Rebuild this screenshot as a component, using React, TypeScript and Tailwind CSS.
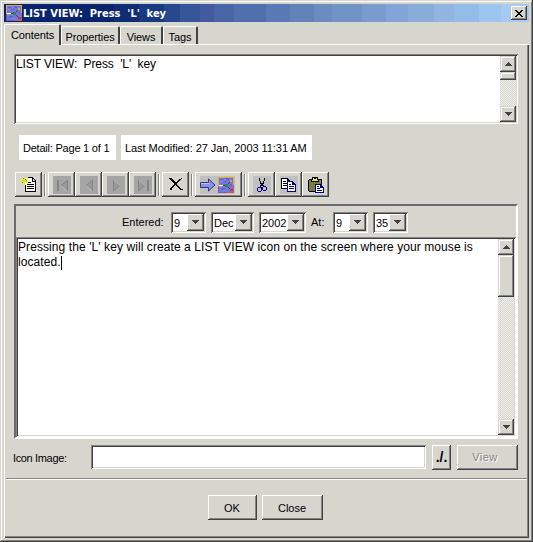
import type { ReactNode } from "react";

const RAISED =
  "bg-[#d6d6ce] shadow-[inset_-1px_-1px_#424242,inset_1px_1px_#ffffff,inset_-2px_-2px_#848484]";
const SUNKEN =
  "shadow-[inset_1px_1px_#848484,inset_-1px_-1px_#ffffff,inset_2px_2px_#424242,inset_-2px_-2px_#d6d6ce]";
const SCROLL_BTN =
  "bg-[#d6d6ce] shadow-[inset_-1px_-1px_#424242,inset_1px_1px_#d6d6ce,inset_-2px_-2px_#848484,inset_2px_2px_#ffffff]";

function Arrow({ up = false }: { up?: boolean }) {
  return (
    <svg width="7" height="4" viewBox="0 0 7 4" shapeRendering="crispEdges" className="block">
      <path fill="#424242" d={up ? "M3 0h1v1h1v1h1v1h1v1H0V3h1V2h1V1h1z" : "M0 0h7v1H6v1H5v1H4v1H3V3H2V2H1V1H0z"} />
    </svg>
  );
}

function ScrollBar({ thumb }: { thumb: string }) {
  return (
    <div className="flex h-full w-4 shrink-0 flex-col bg-[repeating-conic-gradient(#eeeeea_0_25%,#d6d6ce_0_50%)] bg-[length:2px_2px]">
      <div className={`flex h-4 items-center justify-center ${SCROLL_BTN}`}>
        <Arrow up />
      </div>
      <div className={`${thumb} ${SCROLL_BTN}`} />
      <div className="grow" />
      <div className={`flex h-4 items-center justify-center ${SCROLL_BTN}`}>
        <Arrow />
      </div>
    </div>
  );
}

function MapIcon() {
  return (
    <svg width="16" height="16" viewBox="0 0 16 16" shapeRendering="crispEdges" className="block">
      <path fill="#e8a830" d="M0 0h16v16H0z" />
      <path fill="#c85858" d="M15 8h1v8H6v-1h9z" />
      <path fill="#7858b8" d="M0 9h1v6h7v1H0z" />
      <path fill="#7078dc" d="M1 1h14v14H1z" />
      <path fill="#6064c4" d="M2 2h3v1H2zM8 1h3v2H8zM3 11h4v2H3zM12 7h2v2h-2zM5 4h3v1H5z" />
      <path fill="#8888e8" d="M2 4h3v1H2zM5 13h4v1H5zM6 2h2v1H6z" />
      <path stroke="#383878" d="M5 8.500h3M9 8l4-4M9 9l4 4" fill="none" />
      <path fill="#f4f0d8" d="M1 8h4v1H1z" />
      <path fill="#c0a868" d="M1 9h3v1H1z" />
      <path fill="#308838" d="M7 7h3v3H7z" />
      <path fill="#d8a848" d="M12 3h2v2h-2z" />
      <path fill="#c03838" d="M12 12h3v2h-3z" />
    </svg>
  );
}

function NewIcon() {
  return (
    <svg width="16" height="16" viewBox="0 0 16 16" shapeRendering="crispEdges" className="block">
      <path fill="#fff" d="M5 1h7v3h3v11H4V5h1z" />
      <path
        fill="#000"
        d="M7 0h5v1H7zM12 1h1v1h-1zM13 2h1v1h-1zM14 3h1v1h-1zM11 1h1v4h-1zM12 4h3v1h-3zM14 4h1v11h-1zM4 14h11v1H4zM4 8h1v7H4zM7 5h3v1H7zM6 7h7v1H6zM6 9h7v1H6zM6 11h7v1H6z"
      />
      <path fill="#e8e800" d="M3 0h1v2H3zM0 1h1v1H0zM1 2h1v1H1zM6 1h1v1H6zM5 2h1v1H5zM2 3h3v2H2zM0 4h2v1H0zM5 4h2v1H5zM1 6h1v1H1zM0 7h1v1H0zM3 6h1v2H3zM5 5h1v1H5zM6 6h1v1H6z" />
      <path fill="#848400" d="M2 1h1v1H2zM4 2h1v1H4zM1 5h1v1H1zM5 3h1v1H5z" />
    </svg>
  );
}

function NavIcon({ kind }: { kind: "first" | "prev" | "next" | "last" }) {
  const left = kind === "first" || kind === "prev";
  return (
    <svg width="18" height="18" viewBox="0 0 18 18" className="block bg-[#a5a5a5]">
      {kind === "first" && <path shapeRendering="crispEdges" fill="#848484" d="M4 4h2v11H4z" />}
      {kind === "last" && <path shapeRendering="crispEdges" fill="#848484" d="M13 4h2v11h-2z" />}
      {left ? (
        <g transform={kind === "first" ? "translate(2 0)" : undefined}>
          <path fill="#989898" d="M12 4.500v10L6 9.500z" />
          <path fill="none" stroke="#848484" d="M12.500 4v11M12 4.500L6 9.500" />
          <path fill="none" stroke="#bcbcbc" d="M6 10l6 5" />
        </g>
      ) : (
        <g transform={kind === "last" ? "translate(-2 0)" : undefined}>
          <path fill="#989898" d="M7 4.500v10l6-5z" />
          <path fill="none" stroke="#848484" d="M6.500 4v11M7 14.500l6-5" />
          <path fill="none" stroke="#b4b4b4" d="M7 4.500l6 5" />
        </g>
      )}
    </svg>
  );
}

function DeleteIcon() {
  return (
    <svg width="14" height="13" viewBox="0 0 14 13" shapeRendering="crispEdges" className="block">
      <path
        fill="#000"
        d="M0 0h3v1h1v1h1v1h1v1h2V3h1V2h1V1h2V0h1v1h-1v1h-1v1h-1v1H9v1H8v2h1v1h1v1h1v1h1v1h2v1h-3v-1h-1v-1H9v-1H8V8H7V7H6v1H5v1H4v1H3v2H1v-2h1V9h1V8h1V7h1V5H4V4H3V3H2V2H1V1H0z"
      />
    </svg>
  );
}

function GoIcon() {
  return (
    <svg width="16" height="14" viewBox="0 0 16 14" className="block">
      <path fill="#8890e8" stroke="#303878" d="M.5 4.500h8v-3.500l6.500 6-6.500 6v-3.500h-8z" />
      <path stroke="#b8c0ff" d="M1 5.500h8.500" />
    </svg>
  );
}

function CutIcon() {
  return (
    <svg width="18" height="18" viewBox="0 0 18 18" shapeRendering="crispEdges" className="block bg-[#c0c0c0]">
      <path fill="#000" d="M6 2h1v3H6zM7 5h1v3H7zM8 7h2v3H8zM10 5h1v3h-1zM11 2h1v3h-1z" />
      <path
        fill="#000084"
        d="M7 9h1v2H7zM10 9h1v2h-1zM5 11h3v1H5zM4 12h1v3H4zM8 11h1v4H8zM5 15h3v1H5zM10 10h3v1h-3zM9 11h1v3H9zM13 11h1v3h-1zM10 14h3v1h-3z"
      />
    </svg>
  );
}

function CopyIcon() {
  return (
    <svg width="18" height="18" viewBox="0 0 18 18" shapeRendering="crispEdges" className="block bg-[#c0c0c0]">
      <path fill="#000" d="M1 2h7v1h1v1h1v9H1z" />
      <path fill="#fff" d="M2 3h5v3h2v6H2z" />
      <path fill="#000" d="M3 5h3v1H3zM3 7h4v1H3zM3 9h4v1H3z" />
      <path fill="#000084" d="M7 5h6v1h1v1h1v1h1v8H7z" />
      <path fill="#fff" d="M8 6h4v3h3v6H8z" />
      <path fill="#000084" d="M9 8h2v1H9zM9 10h5v1H9zM9 12h5v1H9zM13 7h1v1h-1z" />
    </svg>
  );
}

function PasteIcon() {
  return (
    <svg width="18" height="18" viewBox="0 0 18 18" shapeRendering="crispEdges" className="block">
      <path fill="#000" d="M2 3h13v13H2zM1 4h1v11H1z" />
      <path fill="#7c7c42" d="M2 4h12v11H2z" />
      <path fill="#000" d="M4 3h8v3H4zM5 1h6v2H5z" />
      <path fill="#e8e848" d="M5 4h6v1H5zM6 2h4v2H6z" />
      <path fill="#000" d="M7 2h2v1H7z" />
      <path fill="#000084" d="M8 8h6v1h1v1h1v1h1v6H8z" />
      <path fill="#fff" d="M9 9h4v3h3v4H9z" />
      <path fill="#000084" d="M10 10h2v1h-2zM10 12h3v1h-3zM10 14h5v1h-5zM14 10h1v1h-1z" />
    </svg>
  );
}

function ToolButton({ children, wide = false }: { children: ReactNode; wide?: boolean }) {
  return (
    <button className={`flex h-[25px] items-center justify-center ${wide ? "w-[47px]" : "w-[27px]"} ${RAISED}`}>
      {children}
    </button>
  );
}

function Separator() {
  return <div className="mx-[2px] h-[22px] w-[2px] border-l border-r border-l-[#848484] border-r-white" />;
}

function Select({ value, size }: { value: string; size: string }) {
  return (
    <div className={`flex h-[21px] ${size} bg-white p-[2px] ${SUNKEN}`}>
      <span className="grow pl-px leading-[18px]">{value}</span>
      <span className={`flex w-[17px] shrink-0 items-center justify-center ${RAISED}`}>
        <Arrow />
      </span>
    </div>
  );
}

function Tab({ label, size, active = false }: { label: string; size: string; active?: boolean }) {
  return (
    <div
      className={`${size} ${active ? "h-[21px] pt-px pl-px" : "h-[18px] pt-[3px]"} flex items-center justify-center rounded-t-[2px] border-l border-r-2 border-t border-l-white border-r-[#424242] border-t-white bg-[#d6d6ce]`}
    >
      <span className="tracking-[-0.1px]">{label}</span>
    </div>
  );
}

export default function App() {
  return (
    <div className="flex h-[542px] w-[533px] flex-col bg-[#d6d6ce] p-1 font-['Liberation_Sans',Arial,sans-serif] text-[11px] leading-[13px] whitespace-pre text-black shadow-[inset_-1px_-1px_#424242,inset_1px_1px_#d6d6ce,inset_-2px_-2px_#848484,inset_2px_2px_#ffffff]">
      <header className="flex h-[18px] shrink-0 items-center bg-[linear-gradient(90deg,#08246b_0_110px,#102c74_0_135px,#18387f_0_160px,#27488f_0_176px,#36559a_0_196px,#4459a0_0_210px,#4a65a6_0_230px,#4f70ad_0_262px,#5a7ab5_0_286px,#6283ba_0_310px,#6b8cc0_0_328px,#7194c8_0_358px,#7a9bd0_0_382px,#83a4d8_0_404px,#88add8_0_430px,#92b4e0_0_450px,#94bce8_0_475px,#9cc6f0_0_497px,#a5cbf2_0)] pr-[2px] pl-[2px]">
        <MapIcon />
        <h1 className="ml-[1px] grow font-['DejaVu_Sans_Condensed','DejaVu_Sans',sans-serif] text-[11px] font-bold text-white">
          {"LIST VIEW:  Press  'L'  key"}
        </h1>
        <button className={`flex h-[14px] w-4 items-center justify-center ${RAISED}`}>
          <svg width="8" height="7" viewBox="0 0 8 7" shapeRendering="crispEdges">
            <path d="M0 0h2v1h1v1h2V1h1V0h2v1H7v1H6v1H5v1h1v1h1v1h1v1H6V6H5V5H3v1H2v1H0V6h1V5h1V4h1V3H2V2H1V1H0z" />
          </svg>
        </button>
      </header>

      <nav className="z-10 mt-[2px] -mb-px flex h-[21px] shrink-0 items-end">
        <Tab label="Contents" size="w-[57px]" active />
        <div className="mb-px flex">
          <Tab label="Properties" size="w-[59px]" />
          <Tab label="Views" size="w-[43px]" />
          <Tab label="Tags" size="w-[35px]" />
        </div>
      </nav>

      <main className="flex grow flex-col bg-[#d6d6ce] px-[10px] pt-[10px] shadow-[inset_1px_1px_#ffffff,inset_-1px_-1px_#424242,inset_-2px_-2px_#848484]">
        <div className={`flex h-[70px] w-[504px] shrink-0 bg-white p-[2px] ${SUNKEN}`}>
          <p className="grow pt-[1px] text-[12px] leading-[14px] tracking-[-0.11px]">{"LIST VIEW:  Press  'L'  key"}</p>
          <ScrollBar thumb="h-2" />
        </div>

        <div className="mt-[11px] flex h-[25px] shrink-0 gap-[5px] pl-[5px] leading-[26px]">
          <span className="w-[97px] bg-white pl-1 tracking-[-0.22px]">Detail: Page 1 of 1</span>
          <span className="w-[191px] bg-white pl-1 tracking-[-0.06px]">Last Modified: 27 Jan, 2003 11:31 AM</span>
        </div>

        <div className="mt-3 flex h-[25px] shrink-0 items-center pl-px">
          <ToolButton><NewIcon /></ToolButton>
          <Separator />
          <ToolButton><NavIcon kind="first" /></ToolButton>
          <ToolButton><NavIcon kind="prev" /></ToolButton>
          <ToolButton><NavIcon kind="next" /></ToolButton>
          <ToolButton><NavIcon kind="last" /></ToolButton>
          <Separator />
          <ToolButton><DeleteIcon /></ToolButton>
          <Separator />
          <ToolButton wide>
            <span className="mr-[2px] flex h-[18px] w-[35px] items-center gap-[2px] bg-[#c0c0c0]">
              <GoIcon />
              <MapIcon />
            </span>
          </ToolButton>
          <Separator />
          <ToolButton><CutIcon /></ToolButton>
          <ToolButton><CopyIcon /></ToolButton>
          <ToolButton><PasteIcon /></ToolButton>
        </div>

        <section className="mt-[7px] flex h-[235px] w-[504px] shrink-0 flex-col border-t-2 border-r-2 border-b-2 border-l-2 border-t-[#6b6b6b] border-r-white border-b-white border-l-[#6b6b6b]">
          <div className="flex h-[31px] shrink-0 items-center gap-[5px] pt-px pl-[106px]">
            <span className="w-[44px]">Entered:</span>
            <Select value="9" size="w-[35px]" />
            <Select value="Dec" size="w-[43px]" />
            <Select value="2002" size="w-[47px]" />
            <span className="w-[17px]">At:</span>
            <Select value="9" size="w-[35px]" />
            <Select value="35" size="w-[35px]" />
          </div>
          <div className={`flex h-[200px] bg-white p-[2px] ${SUNKEN}`}>
            <p className="grow pt-px text-[12px] leading-[15px] tracking-[0.085px]">
              {"Pressing the 'L' key will create a LIST VIEW icon on the screen where your mouse is\nlocated."}
              <span className="inline-block h-[14px] w-px bg-black align-bottom" />
            </p>
            <ScrollBar thumb="h-[42px]" />
          </div>
        </section>

        <div className="mt-[6px] flex h-[25px] shrink-0">
          <span className="-ml-px w-[78px] leading-[26px] tracking-[-0.35px]">Icon Image:</span>
          <input className={`h-6 w-[335px] bg-white ${SUNKEN}`} />
          <button className={`ml-[6px] w-[19px] text-[14px] font-bold ${RAISED}`}>./.</button>
          <button className={`ml-[6px] w-[61px] pr-[5px] tracking-[0.5px] text-[#848484] [text-shadow:1px_1px_#ffffff] ${RAISED}`}>View</button>
        </div>

        <div className="-mx-2 mt-2 h-[2px] shrink-0 border-t border-b border-t-[#848484] border-b-white" />

        <footer className="mt-[15px] flex h-[25px] gap-[5px] pl-[194px]">
          <button className={`w-[49px] pt-px pr-px ${RAISED}`}>OK</button>
          <button className={`w-[61px] pt-px pr-px ${RAISED}`}>Close</button>
        </footer>
      </main>
    </div>
  );
}
